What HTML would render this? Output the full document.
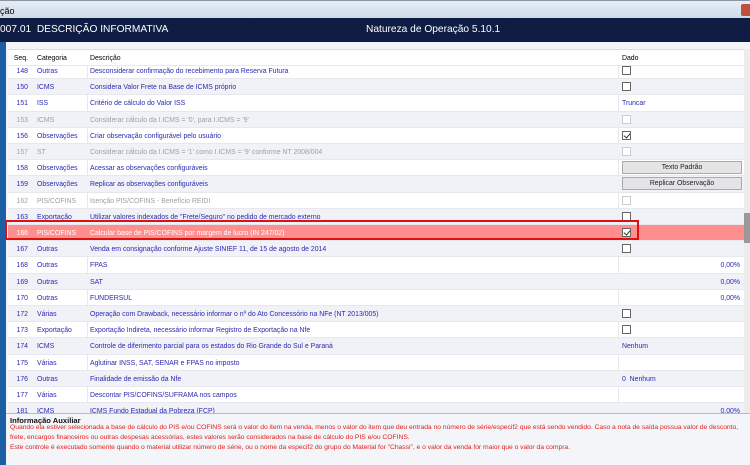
<!DOCTYPE html>
<html><head><meta charset="utf-8"><style>
*{margin:0;padding:0;box-sizing:border-box}
body{width:750px;height:465px;overflow:hidden;background:#f4f5f8;font-family:"Liberation Sans",sans-serif;position:relative}
.tb{position:absolute;left:0;top:0;width:750px;height:18px;background:linear-gradient(#e6edf5,#cfdbe8);border-top:1px solid #8a96a4;font-size:9px;color:#000;padding:5px 0 0 0}
.tb .x{position:absolute;right:0;top:3px;width:9px;height:12px;background:#c0503a;border-radius:2px 0 0 2px}
.hd{position:absolute;left:0;top:18px;width:750px;height:24px;background:#0f1d44;color:#fff;font-size:10.2px}
.hd span{position:absolute;top:6px}
.ls{position:absolute;left:0;top:42px;width:6px;height:423px;background:#1d5da3}
.tbl{position:absolute;left:8px;top:49px;width:736px;height:364px;background:#fff;overflow:hidden;border-top:1px solid #ddd}
.r{position:absolute;left:0;width:736px;height:16.2px;font-size:6.9px;color:#2a2ab0;border-bottom:1px solid #e6e8ee}
.r.a{background:#f0f2f7}
.r span{position:absolute;top:5px;white-space:nowrap}
.r .s{left:0;width:20px;text-align:right}
.r .c{left:29px}.r .d{left:82px}.r .v{left:614px}
.r .p{right:4px}
.g{color:#a0a0a0}
.h{color:#000;background:#fff}
.hl{background:#ff8e8e!important;color:#fff}
.cb{position:absolute;left:614px;top:3px;width:9px;height:9px;border:1px solid #666;background:#fff}
.cb.f{border-color:#ccc}
.cb.k::after{content:"";position:absolute;left:2px;top:0px;width:3px;height:5px;border:solid #333;border-width:0 1px 1px 0;transform:rotate(40deg)}
.btn{position:absolute;left:614px;top:1px;width:120px;height:13px;background:#e4e4e4;border:1px solid #aaa;color:#222;text-align:center;font-size:6.9px;line-height:11px}
.vl{position:absolute;top:0;width:1px;height:364px;background:#e6e8ee}
.sb{position:absolute;left:744px;top:49px;width:6px;height:364px;background:#ececec}
.th{position:absolute;left:744px;top:213px;width:6px;height:30px;background:#9a9a9a}
.red{position:absolute;left:5px;top:220px;width:634px;height:20px;border:2px solid #e01010}
.info{position:absolute;left:6px;top:413px;width:744px;height:52px;border-top:1px solid #bbb;background:#f4f5f8}
.info b{position:absolute;left:4px;top:2px;font-size:7.6px;color:#111}
.info p{position:absolute;left:4px;top:9px;font-size:6.8px;letter-spacing:-0.05px;color:#e42020;line-height:10px;white-space:nowrap}
</style></head><body>
<div class="tb">ção<div class="x"></div></div>
<div class="hd"><span style="left:0">007.01&nbsp; DESCRIÇÃO INFORMATIVA</span><span style="left:366px">Natureza de Operação 5.10.1</span></div>
<div class="ls"></div>
<div class="tbl">
<div class="vl" style="left:79px"></div><div class="vl" style="left:610px"></div>
<div class="r h" style="top:0"><span class="s" style="color:#000">Seq.</span><span class="c">Categoria</span><span class="d">Descrição</span><span class="v">Dado</span></div>
<div class="r" style="top:13px"><span class="s">148</span><span class="c">Outras</span><span class="d">Desconsiderar confirmação do recebimento para Reserva Futura</span><i class="cb"></i></div>
<div class="r a" style="top:29.2px"><span class="s">150</span><span class="c">ICMS</span><span class="d">Considera Valor Frete na Base de ICMS próprio</span><i class="cb"></i></div>
<div class="r" style="top:45.4px"><span class="s">151</span><span class="c">ISS</span><span class="d">Critério de cálculo do Valor ISS</span><span class="v">Truncar</span></div>
<div class="r a g" style="top:61.6px"><span class="s">153</span><span class="c">ICMS</span><span class="d">Considerar cálculo da I.ICMS = '0', para I.ICMS = '9'</span><i class="cb f"></i></div>
<div class="r" style="top:77.8px"><span class="s">156</span><span class="c">Observações</span><span class="d">Criar observação configurável pelo usuário</span><i class="cb k"></i></div>
<div class="r a g" style="top:94px"><span class="s">157</span><span class="c">ST</span><span class="d">Considerar cálculo da I.ICMS = '1' como I.ICMS = '9' conforme NT 2008/004</span><i class="cb f"></i></div>
<div class="r" style="top:110.2px"><span class="s">158</span><span class="c">Observações</span><span class="d">Acessar as observações configuráveis</span><div class="btn">Texto Padrão</div></div>
<div class="r a" style="top:126.4px"><span class="s">159</span><span class="c">Observações</span><span class="d">Replicar as observações configuráveis</span><div class="btn">Replicar Observação</div></div>
<div class="r g" style="top:142.6px"><span class="s">162</span><span class="c">PIS/COFINS</span><span class="d">Isenção PIS/COFINS - Benefício REIDI</span><i class="cb f"></i></div>
<div class="r a" style="top:158.8px"><span class="s">163</span><span class="c">Exportação</span><span class="d">Utilizar valores indexados de "Frete/Seguro" no pedido de mercado externo</span><i class="cb"></i></div>
<div class="r hl" style="top:175px"><span class="s">166</span><span class="c">PIS/COFINS</span><span class="d">Calcular base de PIS/COFINS por margem de lucro (IN 247/02)</span><i class="cb k"></i></div>
<div class="r a" style="top:191.2px"><span class="s">167</span><span class="c">Outras</span><span class="d">Venda em consignação conforme Ajuste SINIEF 11, de 15 de agosto de 2014</span><i class="cb"></i></div>
<div class="r" style="top:207.4px"><span class="s">168</span><span class="c">Outras</span><span class="d">FPAS</span><span class="p">0,00%</span></div>
<div class="r a" style="top:223.6px"><span class="s">169</span><span class="c">Outras</span><span class="d">SAT</span><span class="p">0,00%</span></div>
<div class="r" style="top:239.8px"><span class="s">170</span><span class="c">Outras</span><span class="d">FUNDERSUL</span><span class="p">0,00%</span></div>
<div class="r a" style="top:256px"><span class="s">172</span><span class="c">Várias</span><span class="d">Operação com Drawback, necessário informar o nº do Ato Concessório na NFe (NT 2013/005)</span><i class="cb"></i></div>
<div class="r" style="top:272.2px"><span class="s">173</span><span class="c">Exportação</span><span class="d">Exportação Indireta, necessário informar Registro de Exportação na Nfe</span><i class="cb"></i></div>
<div class="r a" style="top:288.4px"><span class="s">174</span><span class="c">ICMS</span><span class="d">Controle de diferimento parcial para os estados do Rio Grande do Sul e Paraná</span><span class="v">Nenhum</span></div>
<div class="r" style="top:304.6px"><span class="s">175</span><span class="c">Várias</span><span class="d">Aglutinar INSS, SAT, SENAR e FPAS no imposto</span></div>
<div class="r a" style="top:320.8px"><span class="s">176</span><span class="c">Outras</span><span class="d">Finalidade de emissão da Nfe</span><span class="v">0&nbsp; Nenhum</span></div>
<div class="r" style="top:337px"><span class="s">177</span><span class="c">Várias</span><span class="d">Descontar PIS/COFINS/SUFRAMA nos campos</span></div>
<div class="r a" style="top:353.2px"><span class="s">181</span><span class="c">ICMS</span><span class="d">ICMS Fundo Estadual da Pobreza (FCP)</span><span class="p">0,00%</span></div>
</div>
<div class="sb"></div><div class="th"></div>
<div class="red"></div>
<div class="info"><b>Informação Auxiliar</b><p>Quando ela estiver selecionada a base de cálculo do PIS e/ou COFINS será o valor do item na venda, menos o valor do item que deu entrada no número de série/especif2 que está sendo vendido. Caso a nota de saída possua valor de desconto,<br>frete, encargos financeiros ou outras despesas acessórias, estes valores serão considerados na base de cálculo do PIS e/ou COFINS.<br>Este controle é executado somente quando o material utilizar número de série, ou o nome da especif2 do grupo do Material for "Chassi", e o valor da venda for maior que o valor da compra.</p></div>
</body></html>
